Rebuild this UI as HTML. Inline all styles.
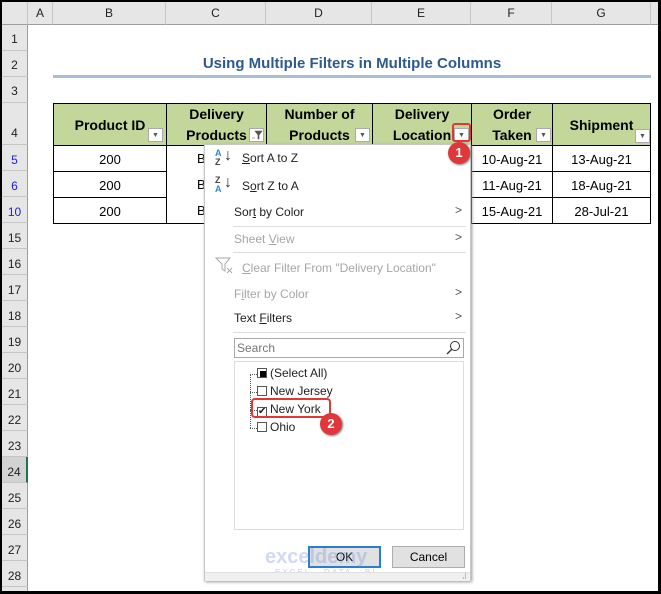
<!DOCTYPE html>
<html><head><style>
*{margin:0;padding:0;box-sizing:border-box}
body{width:661px;height:594px;background:#000;position:relative;overflow:hidden;font-family:"Liberation Sans",sans-serif}
#s{position:absolute;left:2px;top:2px;width:656px;height:589px;background:#fff;overflow:hidden}
.a{position:absolute}
.ch{position:absolute;top:0;height:23px;background:#e6e6e6;border-right:1px solid #c6c6c6;border-bottom:1px solid #9e9e9e;font-size:12px;text-align:center;line-height:23px;color:#222}
.rh{position:absolute;left:0;width:26px;background:#e6e6e6;border-bottom:1px solid #c6c6c6;border-right:1px solid #9e9e9e;font-size:12px;text-align:center;color:#222}
.c{position:absolute;border:1px solid #000;font-size:13px;text-align:center;line-height:27px}
.h{position:absolute;background:#c4d79b;border:1px solid #000;font-size:14px;font-weight:bold;text-align:center;line-height:21px;padding-top:0}
.btn{position:absolute;width:15px;height:14px;border:1px solid #aaa;background:#fff;font-size:7px;color:#555;text-align:center;line-height:13px}
.mi{position:absolute;left:29px;font-size:12px;color:#222}
.dis{color:#a6a6a6}
.ar{position:absolute;left:250px;font-size:12px;color:#555}
.sep{position:absolute;left:28px;right:4px;height:1px;background:#ddd}
.cb{display:inline-block;width:10px;height:10px;border:1px solid #555;vertical-align:-1px;margin-right:3px;background:#fff;position:relative}
.li{position:absolute;left:22px;font-size:12px;color:#222}
.badge{position:absolute;width:22px;height:22px;border-radius:50%;background:#e0373a;color:#fff;font-weight:bold;font-size:13px;text-align:center;line-height:22px;box-shadow:1px 1px 2px #777}
</style></head><body>
<div id="s">
<div class="ch" style="left:0;width:26px"></div>
<div class="ch" style="left:26px;width:25px">A</div>
<div class="ch" style="left:51px;width:113px">B</div>
<div class="ch" style="left:164px;width:100px">C</div>
<div class="ch" style="left:264px;width:106px">D</div>
<div class="ch" style="left:370px;width:99px">E</div>
<div class="ch" style="left:469px;width:81px">F</div>
<div class="ch" style="left:550px;width:99px">G</div>
<div class="ch" style="left:649px;width:10px"></div>

<div class="rh" style="top:23px;height:26px;line-height:28px">1</div>
<div class="rh" style="top:49px;height:26px;line-height:28px">2</div>
<div class="rh" style="top:75px;height:26px;line-height:28px">3</div>
<div class="rh" style="top:101px;height:42px;line-height:60px">4</div>
<div class="rh" style="top:143px;height:26px;line-height:30px;color:#2222cc">5</div>
<div class="rh" style="top:169px;height:26px;line-height:30px;color:#2222cc">6</div>
<div class="rh" style="top:195px;height:26px;line-height:30px;color:#2222cc">10</div>
<div class="rh" style="top:221px;height:26px;line-height:30px">15</div>
<div class="rh" style="top:247px;height:26px;line-height:30px">16</div>
<div class="rh" style="top:273px;height:26px;line-height:30px">17</div>
<div class="rh" style="top:299px;height:26px;line-height:30px">18</div>
<div class="rh" style="top:325px;height:26px;line-height:30px">19</div>
<div class="rh" style="top:351px;height:26px;line-height:30px">20</div>
<div class="rh" style="top:377px;height:26px;line-height:30px">21</div>
<div class="rh" style="top:403px;height:26px;line-height:30px">22</div>
<div class="rh" style="top:429px;height:26px;line-height:30px">23</div>
<div class="rh" style="top:455px;height:26px;line-height:30px;background:#d2d2d2;border-right:2px solid #217346">24</div>
<div class="rh" style="top:481px;height:26px;line-height:30px">25</div>
<div class="rh" style="top:507px;height:26px;line-height:30px">26</div>
<div class="rh" style="top:533px;height:26px;line-height:30px">27</div>
<div class="rh" style="top:559px;height:26px;line-height:30px">28</div>
<div class="rh" style="top:585px;height:10px"></div>

<div class="a" style="left:51px;top:53px;width:598px;text-align:center;font-size:15px;font-weight:bold;color:#2f5b8c">Using Multiple Filters in Multiple Columns</div>
<div class="a" style="left:51px;top:73px;width:598px;height:3px;background:#a8bfdc"></div>

<div class="h" style="left:51px;top:101px;width:114px;height:43px;line-height:43px">Product ID</div>
<div class="h" style="left:164px;top:101px;width:101px;height:43px">Delivery<br>Products</div>
<div class="h" style="left:264px;top:101px;width:107px;height:43px">Number of<br>Products</div>
<div class="h" style="left:370px;top:101px;width:100px;height:43px">Delivery<br>Location</div>
<div class="h" style="left:469px;top:101px;width:82px;height:43px">Order<br>Taken</div>
<div class="h" style="left:550px;top:101px;width:99px;height:43px;line-height:43px">Shipment</div>
<div class="btn" style="left:146px;top:126px">▼</div>
<div class="btn" style="left:247px;top:126px"><svg width="13" height="12" viewBox="0 0 13 12"><path d="M2 9h3M5 2h7L9 6v4H8V6z" fill="#555" stroke="#555" stroke-width="0.6"/></svg></div>
<div class="btn" style="left:353px;top:126px">▼</div>
<div class="btn" style="left:452px;top:126px">▼</div>
<div class="btn" style="left:534px;top:126px">▼</div>
<div class="btn" style="left:633px;top:127px">▼</div>
<div class="a" style="left:450px;top:121px;width:19px;height:19px;border:2px solid #e0373a;border-radius:3px"></div>

<div class="c" style="left:51px;top:143px;width:114px;height:27px">200</div>
<div class="c" style="left:51px;top:169px;width:114px;height:27px">200</div>
<div class="c" style="left:51px;top:195px;width:114px;height:27px">200</div>
<div class="c" style="left:164px;top:143px;width:101px;height:79px;text-align:left;padding-left:30px;line-height:26px">B<br>B<br>B</div>
<div class="c" style="left:469px;top:143px;width:82px;height:27px">10-Aug-21</div>
<div class="c" style="left:469px;top:169px;width:82px;height:27px">11-Aug-21</div>
<div class="c" style="left:469px;top:195px;width:82px;height:27px">15-Aug-21</div>
<div class="c" style="left:550px;top:143px;width:99px;height:27px">13-Aug-21</div>
<div class="c" style="left:550px;top:169px;width:99px;height:27px">18-Aug-21</div>
<div class="c" style="left:550px;top:195px;width:99px;height:27px">28-Jul-21</div>

<!-- dropdown -->
<div class="a" style="left:202px;top:142px;width:267px;height:437px;background:#fff;border:1px solid #c6c6c6;box-shadow:1px 1px 3px #999">
 <div class="a" style="left:10px;top:4px;font-size:9px;line-height:9px;color:#2b88d8;font-weight:bold">A<br><span style="color:#444">Z</span></div><div class="a" style="left:19px;top:2px;font-size:16px;color:#333">↓</div>
 <div class="mi" style="top:6px;left:37px"><u>S</u>ort A to Z</div>
 <div class="a" style="left:10px;top:31px;font-size:9px;line-height:9px;color:#444;font-weight:bold">Z<br><span style="color:#2b88d8">A</span></div><div class="a" style="left:19px;top:29px;font-size:16px;color:#333">↓</div>
 <div class="mi" style="top:34px;left:37px">S<u>o</u>rt Z to A</div>
 <div class="mi" style="top:60px">Sor<u>t</u> by Color</div><div class="ar" style="top:58px">&gt;</div>
 <div class="sep" style="top:81px"></div>
 <div class="mi dis" style="top:87px">Sheet <u>V</u>iew</div><div class="ar dis" style="top:85px">&gt;</div>
 <div class="sep" style="top:107px"></div>
 <svg class="a" style="left:10px;top:112px" width="20" height="18" viewBox="0 0 20 18"><path d="M1 1h14l-5 6v7l-3-2V7z" fill="none" stroke="#aaa"/><path d="M12 11l5 5M17 11l-5 5" stroke="#aaa"/></svg>
 <div class="mi dis" style="top:116px;left:37px"><u>C</u>lear Filter From "Delivery Location"</div>
 <div class="mi dis" style="top:142px">F<u>i</u>lter by Color</div><div class="ar dis" style="top:140px">&gt;</div>
 <div class="mi" style="top:166px">Text <u>F</u>ilters</div><div class="ar" style="top:164px">&gt;</div>
 <div class="sep" style="top:187px"></div>
 <div class="a" style="left:29px;top:193px;width:230px;height:20px;border:1px solid #aaa;font-size:12px;color:#777;padding:2px 2px;line-height:14px">Search<svg style="position:absolute;right:2px;top:1px" width="16" height="16" viewBox="0 0 16 16"><circle cx="10" cy="6" r="4.5" fill="none" stroke="#333"/><path d="M7 9L2 14" stroke="#333" stroke-width="1.3"/></svg></div>
 <div class="a" style="left:29px;top:216px;width:230px;height:169px;border:1px solid #ddd">
  <div class="a" style="left:15px;top:12px;width:8px;height:54px;border-left:1px dotted #555"></div>
  <div class="a" style="left:15px;top:12px;width:7px;border-top:1px dotted #555"></div>
  <div class="a" style="left:15px;top:30px;width:7px;border-top:1px dotted #555"></div>
  <div class="a" style="left:15px;top:48px;width:7px;border-top:1px dotted #555"></div>
  <div class="a" style="left:15px;top:66px;width:7px;border-top:1px dotted #555"></div>
  <div class="li" style="top:4px"><span class="cb"><span style="position:absolute;left:2px;top:2px;width:6px;height:6px;background:#000"></span></span>(Select All)</div>
  <div class="li" style="top:22px"><span class="cb"></span>New Jersey</div>
  <div class="li" style="top:40px"><span class="cb" style="font-size:10px;line-height:8px;text-align:center">✔</span>New York</div>
  <div class="li" style="top:58px"><span class="cb"></span>Ohio</div>
  <div class="a" style="left:16px;top:36px;width:80px;height:20px;border:2px solid #e0373a;border-radius:4px"></div>
 </div>
 <div class="a" style="left:103px;top:401px;width:73px;height:22px;border:2px solid #2b7cd3;background:#e1e1e1;font-size:12px;text-align:center;line-height:18px">OK</div>
 <div class="a" style="left:187px;top:401px;width:73px;height:22px;border:1px solid #adadad;background:#e1e1e1;font-size:12px;text-align:center;line-height:20px">Cancel</div>
 <div class="a" style="left:60px;top:401px;font-size:20px;font-weight:bold;color:rgba(120,150,220,0.35)">exceldemy</div>
 <div class="a" style="left:70px;top:423px;font-size:8px;letter-spacing:2px;color:rgba(120,150,220,0.45)">EXCEL · DATA · BI</div>
 <div class="a" style="left:0;right:0;top:427px;height:9px;background:#f0f0f0;border-top:1px solid #e0e0e0"></div>
 <div class="a" style="right:3px;top:428px;font-size:7px;color:#888">⠼</div>
</div>
<div class="badge" style="left:446px;top:140px">1</div>
<div class="badge" style="left:318px;top:411px">2</div>
</div>
</body></html>
